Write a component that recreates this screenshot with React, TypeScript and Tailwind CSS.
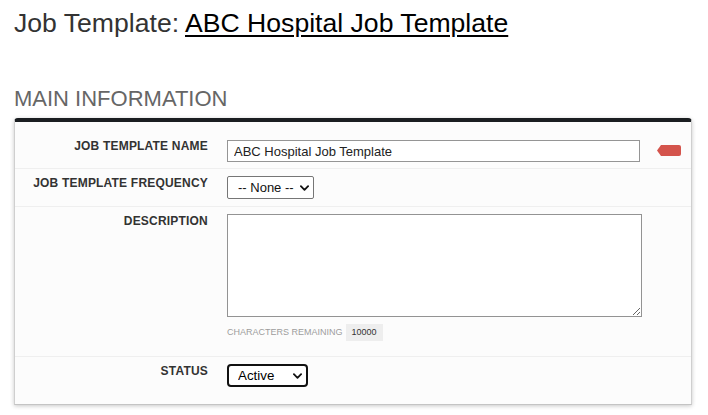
import { useState } from "react"

function Chevron({ className }: { className?: string }) {
    return (
        <svg viewBox="0 0 10 6" className={className} fill="none">
            <polyline points="1,1 5,5 9,1" stroke="currentColor" strokeWidth="2" strokeLinecap="round" strokeLinejoin="round" />
        </svg>
    )
}

function RequiredTag() {
    return (
        <svg viewBox="0 0 24 11" className="w-[24px] h-[11px] shrink-0">
            <path d="M4 0 H22 Q24 0 24 2 V9 Q24 11 22 11 H4 L0 5.5 Z" fill="#d4544c" />
        </svg>
    )
}

function Row({ label, children, last, first }: { label: string; children: React.ReactNode; last?: boolean; first?: boolean }) {
    return (
        <div className={`grid grid-cols-[193px_1fr] gap-x-[19px] ${last ? '' : 'border-b border-[#efefef]'}`}>
            <div className={`${first ? 'pt-[5px]' : 'pt-[7px]'} text-right text-[12px] leading-[14px] font-bold tracking-[0.2px] text-[#333]`}>{label}</div>
            <div>{children}</div>
        </div>
    )
}

export default function App() {
    const [name, setName] = useState("ABC Hospital Job Template")
    const [description, setDescription] = useState("")
    const [frequency, setFrequency] = useState("")
    const [status, setStatus] = useState("active")

    return (
        <div className="min-h-screen bg-white pl-[14px] pr-[16px] pt-[8px] font-['Liberation_Sans',Arial,sans-serif]">
            <h1 className="text-[26.6px] leading-[30px] text-[#333]">
                Job Template:{' '}
                <a href="#" className="text-black underline decoration-[2px] underline-offset-[3px]">ABC Hospital Job Template</a>
            </h1>

            <h2 className="mt-[48px] mb-[6px] text-[22px] leading-[26px] text-[#666]">MAIN INFORMATION</h2>

            {/* Card */}
            <div className="bg-[#fcfcfc] border-t-[4px] border-t-[#1b1e21] border-x border-b border-x-[#cfcfcf] border-b-[#c4c4c4] rounded-t-[4px] shadow-[0_1px_4px_rgba(0,0,0,0.22)] pt-[12px] pb-[10px]">
                <Row label="JOB TEMPLATE NAME" first>
                    <div className="flex items-center py-[6px]">
                        <input
                            value={name}
                            onChange={(e) => setName(e.target.value)}
                            className="w-[413px] h-[22px] px-[6px] bg-white border border-[#959595] text-[13px] text-[#222] outline-none"
                        />
                        <div className="ml-[17px] -mt-[2px]">
                            <RequiredTag />
                        </div>
                    </div>
                </Row>

                <Row label="JOB TEMPLATE FREQUENCY">
                    <div className="py-[7px]">
                        <div className="relative flex w-fit">
                            <select
                                value={frequency}
                                onChange={(e) => setFrequency(e.target.value)}
                                className="appearance-none w-[87px] h-[23px] pl-[10px] pr-[16px] bg-white border border-[#767676] rounded-[2px] text-[13px] text-[#111] outline-none"
                            >
                                <option value="">-- None --</option>
                                <option value="weekly">Weekly</option>
                                <option value="monthly">Monthly</option>
                            </select>
                            <Chevron className="pointer-events-none absolute right-[5px] top-[9px] w-[9px] h-[6px] text-[#111]" />
                        </div>
                    </div>
                </Row>

                <Row label="DESCRIPTION">
                    <div className="pt-[7px] pb-[15px]">
                        <textarea
                            value={description}
                            onChange={(e) => setDescription(e.target.value)}
                            className="block w-[415px] h-[103px] bg-white border border-[#939393] p-[4px] text-[13px] outline-none"
                        />
                        <div className="flex items-center gap-[3px] mt-[7px]">
                            <span className="text-[9px] text-[#9c9c9c]">CHARACTERS REMAINING</span>
                            <span className="flex items-center h-[17px] px-[6px] bg-[#eeeeee] text-[9px] text-[#333]">
                                {10000 - description.length}
                            </span>
                        </div>
                    </div>
                </Row>

                <Row label="STATUS" last>
                    <div className="py-[7px]">
                        <div className="relative flex w-fit">
                            <select
                                value={status}
                                onChange={(e) => setStatus(e.target.value)}
                                className="appearance-none w-[81px] h-[23px] pl-[9px] pr-[20px] bg-white border-2 border-[#111] rounded-[4px] text-[13.33px] text-black outline-none"
                            >
                                <option value="active">Active</option>
                                <option value="inactive">Inactive</option>
                            </select>
                            <Chevron className="pointer-events-none absolute right-[6px] top-[9px] w-[9px] h-[6px] text-[#111]" />
                        </div>
                    </div>
                </Row>
            </div>
        </div>
    )
}
